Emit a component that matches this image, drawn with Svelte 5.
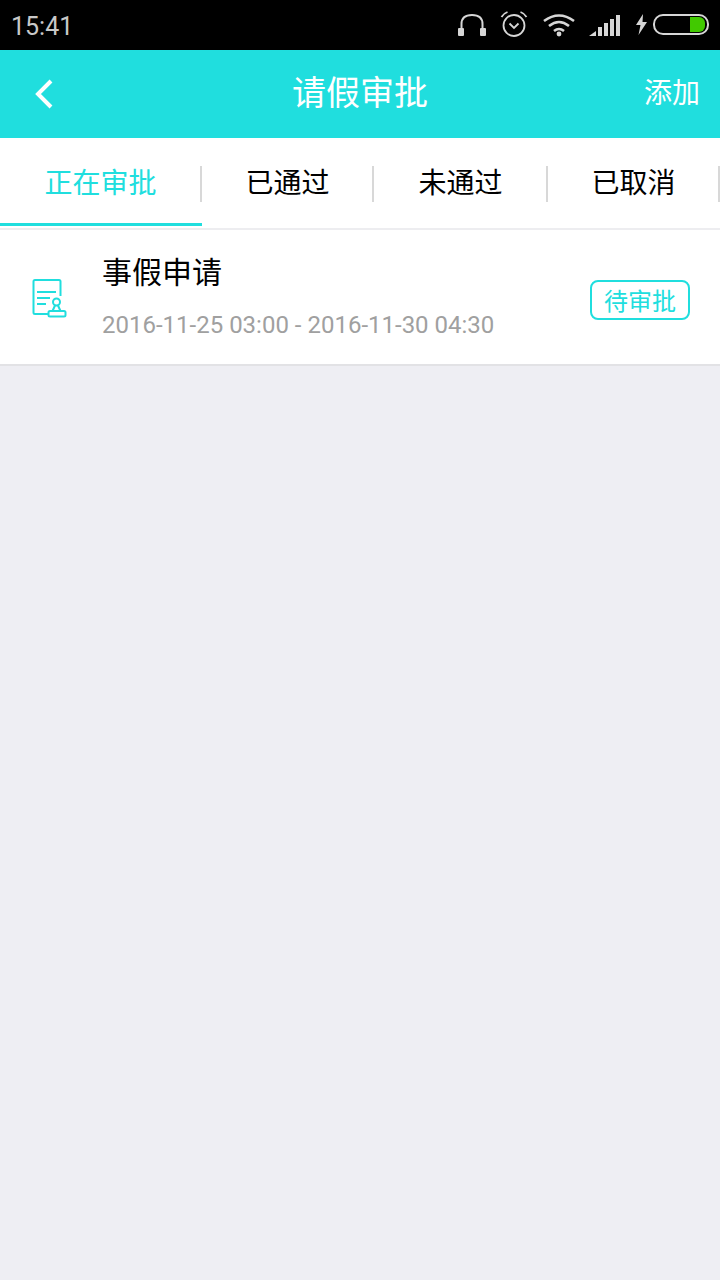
<script lang="ts">
  const tabs = [
    { label: '正在审批', active: true },
    { label: '已通过', active: false },
    { label: '未通过', active: false },
    { label: '已取消', active: false }
  ];
</script>

<div class="page">
  <div class="status-bar">
    <span class="time">15:41</span>
    <div class="status-icons">
      <!-- Headphones -->
      <svg class="ic-phones" width="28" height="24" viewBox="0 0 28 24" fill="none">
        <path d="M3.5 18 V11 Q3.5 2 14 2 Q24.5 2 24.5 11 V18" stroke="#d6d6d6" stroke-width="2"/>
        <rect x="0" y="15" width="6" height="8" rx="1" fill="#d6d6d6"/>
        <rect x="22" y="15" width="6" height="8" rx="1" fill="#d6d6d6"/>
      </svg>
      <!-- Alarm -->
      <svg class="ic-alarm" width="28" height="26" viewBox="0 0 28 26" fill="none" stroke="#d6d6d6">
        <circle cx="14" cy="14.5" r="10.5" stroke-width="1.8"/>
        <path d="M9.5 12.5 L14 17 L18.5 12.5" stroke-width="1.8"/>
        <path d="M1.5 6 Q3.5 2.5 7.5 1" stroke-width="1.8"/>
        <path d="M26.5 6 Q24.5 2.5 20.5 1" stroke-width="1.8"/>
      </svg>
      <!-- Wifi -->
      <svg class="ic-wifi" width="32" height="24" viewBox="0 0 32 24" fill="none" stroke="#d6d6d6" stroke-width="2.6">
        <path d="M1 8 Q16 -3 31 8"/>
        <path d="M6 13 Q16 5 26 13"/>
        <path d="M11 18 Q16 14 21 18"/>
        <circle cx="16" cy="21" r="2.4" fill="#d6d6d6" stroke="none"/>
      </svg>
      <!-- Signal -->
      <svg class="ic-signal" width="32" height="22" viewBox="0 0 32 22" fill="#d6d6d6">
        <path d="M0 21 L7 16 V21 Z"/>
        <rect x="9" y="12" width="4" height="9"/>
        <rect x="15" y="8" width="4" height="13"/>
        <rect x="21" y="4" width="4" height="17"/>
        <rect x="27" y="0" width="4" height="21"/>
      </svg>
      <!-- Charging bolt -->
      <svg class="ic-bolt" width="13" height="21" viewBox="0 0 13 21" fill="#d6d6d6">
        <path d="M8 0 L1 11 H5.5 L3.5 21 L12 8 H7.5 Z"/>
      </svg>
      <div class="battery"><span class="battery-fill"></span></div>
    </div>
  </div>

  <header class="nav">
    <svg class="back" width="20" height="32" viewBox="0 0 20 32" fill="none">
      <path d="M17 3 L4 16 L17 29" stroke="#fff" stroke-width="4"/>
    </svg>
    <h1>请假审批</h1>
    <span class="add">添加</span>
  </header>

  <nav class="tabs">
    {#each tabs as tab}
      <div class="tab" class:active={tab.active}>
        <span>{tab.label}</span>
      </div>
    {/each}
  </nav>

  <div class="item">
    <svg class="doc" width="36" height="40" viewBox="0 0 36 40" fill="none" stroke="#20dede" stroke-width="2">
      <path d="M17 35 H3 Q1.5 35 1.5 33.5 V2.5 Q1.5 1 3 1 H27 Q28.500 1 28.500 2.500 V17"/>
      <path d="M5 13 H24 M5 19 H18 M5 25 H14"/>
      <circle cx="24.500" cy="23" r="3.500"/>
      <path d="M23 26.500 L20.500 32 M26 26.500 L28.500 32"/>
      <rect x="16.500" y="32" width="17" height="5.500" rx="1.500"/>
    </svg>
    <div class="item-body">
      <div class="item-title">事假申请</div>
      <div class="item-time">2016-11-25 03:00 - 2016-11-30 04:30</div>
    </div>
    <span class="badge">待审批</span>
  </div>
</div>

<style>
  :global(body) {
    margin: 0;
    background: #eeeef3;
  }

  .page {
    min-height: 1280px;
    background: #eeeef3;
    font-family: "Noto Sans CJK SC", Roboto, sans-serif;
  }

  .status-bar {
    height: 50px;
    background: #000;
    display: flex;
    align-items: center;
    justify-content: space-between;
    padding: 0 11px 0 11px;
    color: #c8c8c8;
  }

  .time {
    font-family: Roboto, sans-serif;
    font-size: 25px;
    line-height: 50px;
    padding-top: 3px;
  }

  .status-icons {
    display: flex;
    align-items: center;
    margin-top: -1px;
  }

  .ic-phones { margin-right: 14px; }
  .ic-alarm { margin-right: 15px; margin-top: -1px; }
  .ic-wifi { margin-right: 14px; }
  .ic-signal { margin-right: 14px; margin-top: 2px; }
  .ic-bolt { margin-right: 5px; }

  .battery {
    width: 50px;
    height: 15px;
    border: 2px solid #d6d6d6;
    border-radius: 10px;
    display: flex;
    justify-content: flex-end;
    padding: 1px 2px 1px 0;
  }

  .battery-fill {
    width: 15px;
    background: #41c900;
    border-radius: 0 6px 6px 0;
  }

  .nav {
    height: 88px;
    background: #20dede;
    display: flex;
    align-items: center;
    justify-content: space-between;
    position: relative;
    padding: 0 20px 0 34px;
    color: #fff;
  }

  .back {
    margin-top: -1px;
  }

  .nav h1 {
    position: absolute;
    left: 0;
    right: 0;
    top: -3px;
    margin: 0;
    text-align: center;
    font-size: 34px;
    font-weight: 400;
    line-height: 88px;
    pointer-events: none;
  }

  .add {
    font-size: 28px;
    margin-top: -6px;
  }

  .tabs {
    display: grid;
    grid-template-columns: 202px 172px 174px 172px;
    height: 90px;
    background: #fff;
    border-bottom: 2px solid #ededf0;
  }

  .tab {
    display: flex;
    align-items: center;
    justify-content: center;
    position: relative;
    font-size: 28px;
    color: #000;
    padding: 0 1px 4px 0;
    box-sizing: border-box;
    height: 90px;
  }

  .tab::after {
    content: "";
    position: absolute;
    right: 0;
    top: 28px;
    width: 2px;
    height: 36px;
    background: #d8d8d8;
  }

  .tab.active {
    color: #20dede;
  }

  .tab.active::before {
    content: "";
    position: absolute;
    left: 0;
    right: 0;
    bottom: 2px;
    height: 3px;
    background: #20dede;
  }

  .item {
    height: 134px;
    background: #fff;
    border-bottom: 2px solid #e2e2e5;
    display: flex;
    align-items: center;
    padding: 0 30px 0 32px;
  }

  .doc {
    margin-top: 4px;
    flex: none;
  }

  .item-body {
    flex: 1;
    margin-left: 34px;
    margin-top: -4px;
  }

  .item-title {
    font-size: 30px;
    line-height: 40px;
    color: #000;
    margin-bottom: 19px;
  }

  .item-time {
    font-family: Roboto, sans-serif;
    font-size: 24px;
    line-height: 32px;
    color: #a0a0a0;
  }

  .badge {
    width: 96px;
    height: 36px;
    margin-top: 5px;
    border: 2px solid #20dede;
    border-radius: 8px;
    color: #20dede;
    font-size: 24px;
    line-height: 36px;
    text-align: center;
  }
</style>
